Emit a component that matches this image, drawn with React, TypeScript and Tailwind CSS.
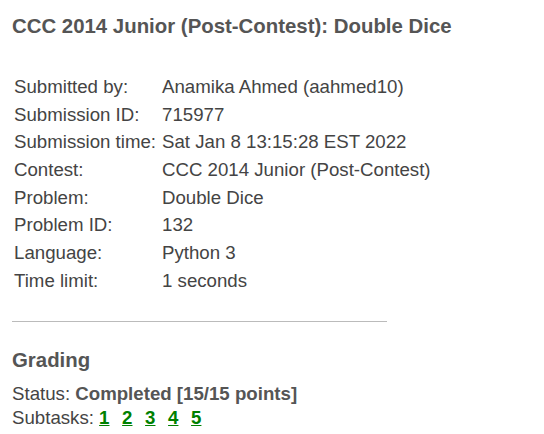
import React from 'react';

const rows: [string, string][] = [
  ['Submitted by:', 'Anamika Ahmed (aahmed10)'],
  ['Submission ID:', '715977'],
  ['Submission time:', 'Sat Jan 8 13:15:28 EST 2022'],
  ['Contest:', 'CCC 2014 Junior (Post-Contest)'],
  ['Problem:', 'Double Dice'],
  ['Problem ID:', '132'],
  ['Language:', 'Python 3'],
  ['Time limit:', '1 seconds'],
];

export default function App() {
  return (
    <div className="w-[544px] h-[434px] bg-white px-3 text-[#444] text-[18.67px] font-['Liberation_Sans',Arial,sans-serif] overflow-hidden">
      <h2 className="pt-[15px] h-[37px] leading-[22px] text-[20.4px] font-bold text-[#555]">
        CCC 2014 Junior (Post-Contest): Double Dice
      </h2>

      <div className="mt-[36px] grid grid-cols-[148px_auto] pl-[2px]">
        {rows.map(([label, value]) => (
          <React.Fragment key={label}>
            <div className="h-[27.7px] leading-[27.7px] whitespace-nowrap">{label}</div>
            <div className="h-[27.7px] leading-[27.7px] whitespace-nowrap">{value}</div>
          </React.Fragment>
        ))}
      </div>

      <hr className="mt-[26px] w-[375px] border-0 border-t border-[#bbb]" />

      <h3 className="mt-[26px] leading-[24px] text-[20.4px] font-bold text-[#555]">Grading</h3>
      <div className="mt-[10px] leading-[24px]">
        Status: <b className="text-[#555]">Completed [15/15 points]</b>
      </div>
      <div className="leading-[24px] flex">
        <span>Subtasks:&nbsp;</span>
        {[1, 2, 3, 4, 5].map((n) => (
          <a key={n} href="#" className="font-bold text-[#008000] underline mr-[12.6px]">
            {n}
          </a>
        ))}
      </div>
    </div>
  );
}
